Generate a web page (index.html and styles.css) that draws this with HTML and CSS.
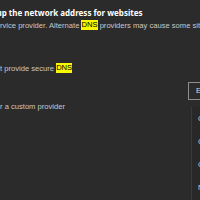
FILE: index.html
```html
<!DOCTYPE html>
<html lang="en">
<head>
<meta charset="utf-8">
<title>Secure DNS</title>
<link rel="stylesheet" href="styles.css">
</head>
<body>
<main class="panel">
  <section class="setting">
    <h2 class="title">up the network address for websites</h2>
    <p class="desc">rvice provider. Alternate <mark class="hit">DNS</mark> providers may cause some sites to not be reachable</p>
  </section>
  <section class="option">
    <p class="desc">t provide secure <mark class="hit">DNS</mark></p>
  </section>
  <section class="option option-custom">
    <div class="opt-text">
      <p class="desc">r a custom provider</p>
    </div>
    <div class="picker">
      <div class="field">Enter custom provider</div>
      <ul class="menu">
        <li>Cleanbrowsing</li>
        <li>Cloudflare</li>
        <li>Google</li>
        <li>NextDNS</li>
      </ul>
    </div>
  </section>
</main>
</body>
</html>
```
FILE: styles.css
```css
html, body {
  margin: 0;
  padding: 0;
  background: #2b2b2b;
  overflow: hidden;
}
body {
  width: 200px;
  height: 200px;
  font-family: "Liberation Sans", Arial, sans-serif;
  color: #c8c8c8;
}
.panel {
  display: flex;
  flex-direction: column;
  padding-top: 7px;
  width: 400px;
}
.title {
  margin: 0 0 0 -3.5px;
  font-family: "Noto Sans", "Open Sans", sans-serif;
  font-size: 8px;
  line-height: 12px;
  font-weight: 700;
  color: #ffffff;
  white-space: nowrap;
}
.desc {
  margin: 0;
  font-size: 7.6px;
  line-height: 11px;
  white-space: nowrap;
  color: #c8c8c8;
}
.setting .desc {
  margin-top: 0.5px;
}
.hit {
  background: #fbf700;
  color: #000;
  padding: 0.4px 0;
}
.option {
  margin-top: 32px;
}
.option-custom {
  margin-top: 8px;
  display: flex;
  align-items: flex-start;
}
.opt-text {
  flex: 0 0 188px;
  padding-top: 19px;
}
.picker {
  position: relative;
  width: 160px;
}
.field {
  box-sizing: border-box;
  height: 18px;
  border: 1px solid #8e8e8e;
  padding: 0 7px;
  font-size: 8px;
  line-height: 16px;
  color: #d8d8d8;
  white-space: nowrap;
}
.menu {
  position: absolute;
  top: 25px;
  left: 3px;
  width: 150px;
  height: 120px;
  margin: 0;
  padding: 0;
  list-style: none;
  background: #282828;
  border-left: 1px solid #3a3a3a;
}
.menu li {
  height: 23px;
  padding-left: 6px;
  font-size: 7.6px;
  line-height: 23px;
  color: #d0d0d0;
  white-space: nowrap;
}
```
